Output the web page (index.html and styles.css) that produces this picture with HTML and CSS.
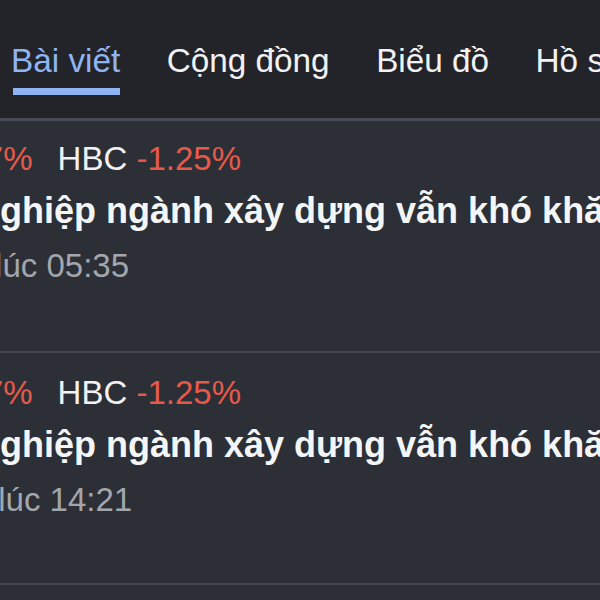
FILE: index.html
```html
<!DOCTYPE html>
<html lang="vi">
<head>
<meta charset="utf-8">
<title>Bài viết</title>
<link rel="stylesheet" href="styles.css">
</head>
<body>
<div class="screen">
  <nav class="tabs">
    <div class="tab active">Bài viết<span class="bar"></span></div>
    <div class="tab">Cộng đồng</div>
    <div class="tab">Biểu đồ</div>
    <div class="tab">Hồ sơ</div>
  </nav>
  <section class="feed">
    <article class="post">
      <div class="tickers lead1"><span class="down">-1.27%</span><span class="sym">HBC</span> <span class="down">-1.25%</span></div>
      <h2 class="title">Doanh nghiệp ngành xây dựng vẫn khó khăn</h2>
      <div class="time t1">Hôm qua lúc 05:35</div>
    </article>
    <article class="post">
      <div class="tickers lead1"><span class="down">-1.27%</span><span class="sym">HBC</span> <span class="down">-1.25%</span></div>
      <h2 class="title">Doanh nghiệp ngành xây dựng vẫn khó khăn</h2>
      <div class="time t2">Hôm nay lúc 14:21</div>
    </article>
    <article class="post"></article>
  </section>
</div>
</body>
</html>
```
FILE: styles.css
```css
* { box-sizing: border-box; }
html, body {
  margin: 0;
  padding: 0;
  background: #2c2f36;
  overflow: hidden;
}
body {
  font-family: "Liberation Sans", Arial, sans-serif;
  width: 600px;
  height: 600px;
}
.screen {
  width: 600px;
  white-space: nowrap;
}
.tabs {
  display: flex;
  gap: 46.5px;
  background: #232429;
  padding: 41px 0 0 11px;
  height: 121px;
  border-bottom: 3px solid #484b53;
}
.tab {
  font-size: 33.3px;
  line-height: 40px;
  color: #f2f2f4;
  display: flex;
  flex-direction: column;
}
.tab.active { color: #8fb4f4; }
.bar {
  display: block;
  height: 7px;
  margin-top: 7px;
  margin-left: 2px;
  background: #8fb4f4;
}
.post {
  height: 232px;
  padding-top: 18px;
  border-bottom: 2px solid #41444c;
  display: flex;
  flex-direction: column;
}
.post + .post { padding-top: 20px; }
.tickers {
  font-size: 33px;
  line-height: 40px;
  color: #f2f2f4;
}
.lead1 { text-indent: -72px; }
.down { color: #e65a4a; }
.sym { margin-left: 25px; }
.title {
  margin: 10px 0 0;
  font-size: 36px;
  line-height: 44px;
  font-weight: bold;
  color: #f4f5f7;
  text-indent: -144px;
}
.time {
  margin-top: 13px;
  font-size: 33px;
  line-height: 40px;
  color: #a3a6ad;
}
.t1 { text-indent: -148px; }
.t2 { text-indent: -143px; }
```
